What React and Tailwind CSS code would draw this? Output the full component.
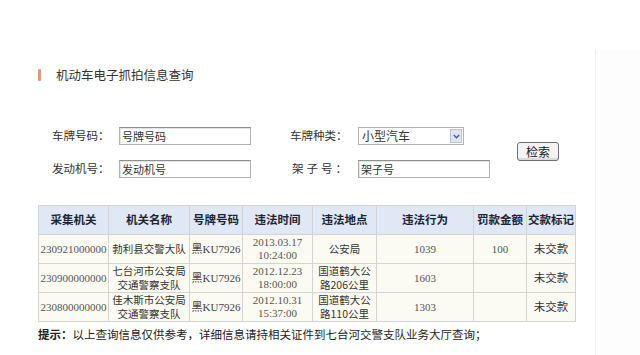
import React from "react";

const cn = '"Noto Sans CJK SC", "Noto Sans", sans-serif';
const serif = '"Liberation Serif", "Noto Sans CJK SC", serif';

const cols = [
  { title: "采集机关", w: "w-[70px]" },
  { title: "机关名称", w: "w-[81px]" },
  { title: "号牌号码", w: "w-[53px]" },
  { title: "违法时间", w: "w-[70px]" },
  { title: "违法地点", w: "w-[64px]" },
  { title: "违法行为", w: "w-[97px]" },
  { title: "罚款金额", w: "w-[53px]" },
  { title: "交款标记", w: "w-[49px]" },
];

const rows = [
  {
    code: "230921000000",
    org: ["勃利县交警大队"],
    plate: "黑KU7926",
    time: ["2013.03.17", "10:24:00"],
    place: ["公安局"],
    act: "1039",
    fine: "100",
    mark: "未交款",
  },
  {
    code: "230900000000",
    org: ["七台河市公安局", "交通警察支队"],
    plate: "黑KU7926",
    time: ["2012.12.23", "18:00:00"],
    place: ["国道鹤大公", "路206公里"],
    act: "1603",
    fine: "",
    mark: "未交款",
  },
  {
    code: "230800000000",
    org: ["佳木斯市公安局", "交通警察支队"],
    plate: "黑KU7926",
    time: ["2012.10.31", "15:37:00"],
    place: ["国道鹤大公", "路110公里"],
    act: "1303",
    fine: "",
    mark: "未交款",
  },
];

const TextInput = ({ value, width }) => (
  <div
    className={`${width} h-[18px] bg-white border border-[#b0b0b0] border-t-[#8e8e8e] shadow-[inset_1px_1px_0_#e4e4e4] px-[2px] text-[11px] leading-[16px] text-[#333]`}
  >
    {value}
  </div>
);

const cell = "border border-[#d4d4d4] bg-[#fcfbf3] text-center align-middle p-0 whitespace-nowrap";

export default function App() {
  return (
    <div className="w-[640px] h-[355px] bg-white overflow-hidden" style={{ fontFamily: cn }}>
      <div className="h-[50px]" />
      <div className="flex h-[305px]">
        <div className="w-[596px] border-r border-[#eff0f3]">
          {/* title */}
          <div className="flex items-center mt-[17px] pl-[38px] h-[15px]">
            <div className="w-[3px] h-[12px] bg-[#e49a78] rounded-[1px]" />
            <span className="ml-[15px] text-[12.5px] text-[#333] leading-[15px]">机动车电子抓拍信息查询</span>
          </div>

          {/* form */}
          <div className="flex items-center mt-[45px] pl-[52px] text-[11.5px] text-[#333]">
            <div className="flex flex-col gap-[15px]">
              <div className="flex items-center">
                <span className="w-[67px]">车牌号码：</span>
                <TextInput value="号牌号码" width="w-[132px]" />
                <span className="ml-[39px] w-[68px]">车牌种类：</span>
                <div className="w-[106px] h-[18px] bg-white border border-[#b0b0b0] flex items-center justify-between pl-[3px] pr-[1px]">
                  <span className="text-[12px] leading-[16px]">小型汽车</span>
                  <div className="w-[12px] h-[14px] bg-[#dfe4f2] border border-[#b9c2da] flex items-center justify-center">
                    <svg width="7" height="5" viewBox="0 0 7 5">
                      <path d="M0.8 1 L3.5 3.8 L6.2 1" fill="none" stroke="#4a5a8a" strokeWidth="1.3" />
                    </svg>
                  </div>
                </div>
              </div>
              <div className="flex items-center">
                <span className="w-[67px]">发动机号：</span>
                <TextInput value="发动机号" width="w-[132px]" />
                <span className="ml-[39px] w-[68px] pl-[2px] tracking-[3px]">架子号：</span>
                <TextInput value="架子号" width="w-[132px]" />
              </div>
            </div>
            <button className="ml-[27px] mt-[-2px] w-[42px] h-[19px] bg-[#f4f4f4] border border-[#707070] rounded-[3px] shadow-[inset_0_-2px_0_#dcdcdc] text-[12px] leading-[15px] text-[#222]">
              检索
            </button>
          </div>

          {/* table */}
          <table className="mt-[27px] ml-[38px] border-collapse table-fixed w-[537px]">
            <thead>
              <tr className="h-[29px]">
                {cols.map((c) => (
                  <th
                    key={c.title}
                    className={`${c.w} border border-[#d4d4d4] bg-[#dfe8f4] text-[11.5px] font-bold text-[#1d2433] p-0 text-center whitespace-nowrap`}
                  >
                    {c.title}
                  </th>
                ))}
              </tr>
            </thead>
            <tbody>
              {rows.map((r) => (
                <tr key={r.code} className="h-[29px]">
                  <td className={`${cell} text-[11px] text-[#555]`} style={{ fontFamily: serif }}>
                    {r.code}
                  </td>
                  <td className={`${cell} text-[10.5px] leading-[14px] text-[#333]`}>
                    {r.org.map((t) => (
                      <div key={t} className="h-[14px] leading-[14px]">
                        {t}
                      </div>
                    ))}
                  </td>
                  <td className={`${cell} text-[11px] text-[#444]`} style={{ fontFamily: serif }}>
                    {r.plate}
                  </td>
                  <td className={`${cell} text-[11px] leading-[13px] text-[#555]`} style={{ fontFamily: serif }}>
                    {r.time.map((t) => (
                      <div key={t}>{t}</div>
                    ))}
                  </td>
                  <td className={`${cell} text-[10.5px] leading-[14px] text-[#333]`}>
                    {r.place.map((t) => (
                      <div key={t} className="h-[14px] leading-[14px]">
                        {t}
                      </div>
                    ))}
                  </td>
                  <td className={`${cell} text-[11px] text-[#555]`} style={{ fontFamily: serif }}>
                    {r.act}
                  </td>
                  <td className={`${cell} text-[11px] text-[#555]`} style={{ fontFamily: serif }}>
                    {r.fine}
                  </td>
                  <td className={`${cell} text-[11.5px] text-[#333]`}>{r.mark}</td>
                </tr>
              ))}
            </tbody>
          </table>

          {/* note */}
          <p className="ml-[38px] mt-[5px] text-[11.5px] leading-[14px] text-[#222]">
            <span className="font-bold">提示：</span>以上查询信息仅供参考，详细信息请持相关证件到七台河交警支队业务大厅查询；
          </p>
        </div>
        <div className="flex-1 bg-[#fdfdfd]" />
      </div>
    </div>
  );
}
